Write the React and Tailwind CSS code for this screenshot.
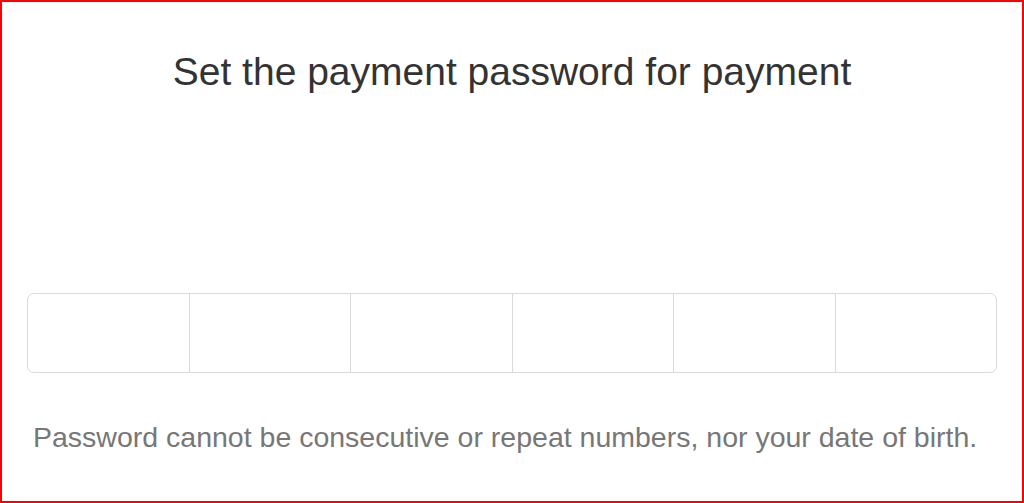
import React from 'react';

const CELLS = 6;

export default function App() {
  return (
    <div className="w-[1024px] h-[503px] bg-white border-2 border-[#ff0000] font-['Liberation_Sans',Arial,sans-serif] overflow-hidden">
      {/* Title */}
      <h1 className="pt-[47px] text-center text-[39px] leading-[46px] text-[#333333]">
        Set the payment password for payment
      </h1>

      {/* Password boxes */}
      <div className="mx-[25px] mt-[198px] h-[80px] flex border border-[#dadada] rounded-[7px]">
        {Array.from({ length: CELLS }).map((_, i) => (
          <div
            key={i}
            className={`flex-1 ${i < CELLS - 1 ? 'border-r border-[#dadada]' : ''}`}
          />
        ))}
      </div>

      {/* Hint */}
      <p className="mt-[48px] pl-[31px] text-[28.5px] leading-[32px] text-[#777777]">
        Password cannot be consecutive or repeat numbers, nor your date of birth.
      </p>
    </div>
  );
}
